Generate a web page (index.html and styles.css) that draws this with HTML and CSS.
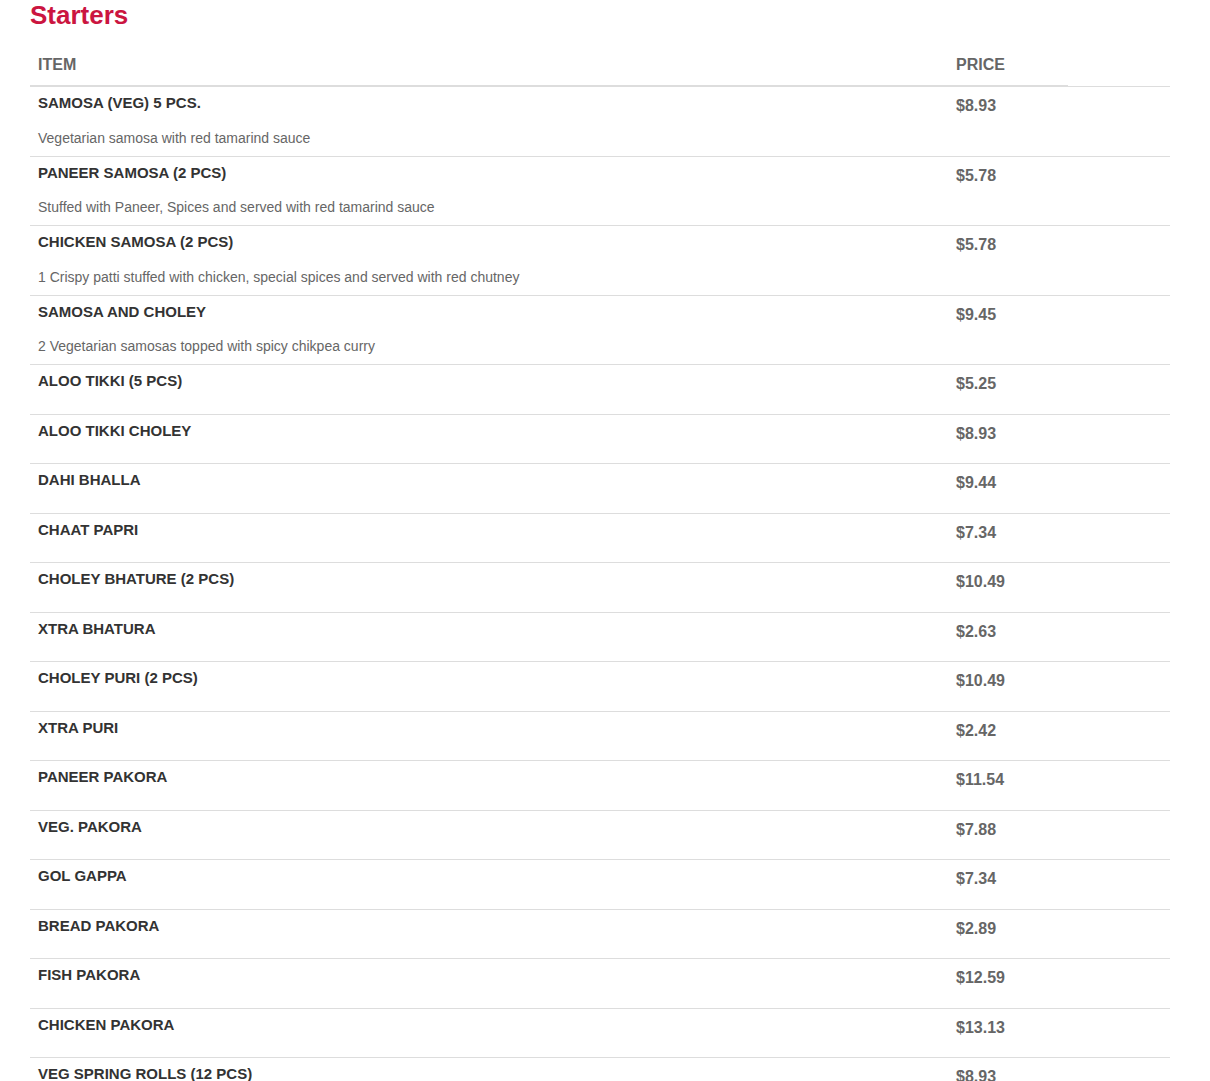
FILE: index.html
```html
<!DOCTYPE html>
<html>
<head>
<meta charset="utf-8">
<link rel="stylesheet" href="styles.css">
</head>
<body>
<div class="menu">
  <h2 class="section-title">Starters</h2>
  <table class="menu-table">
    <colgroup>
      <col class="col-item">
      <col class="col-price">
      <col class="col-extra">
    </colgroup>
    <thead>
      <tr><th>ITEM</th><th>PRICE</th></tr>
    </thead>
    <tbody>
      <tr><td><div class="name">SAMOSA (VEG) 5 PCS.</div><div class="desc">Vegetarian samosa with red tamarind sauce</div></td><td class="price">$8.93</td><td></td></tr>
      <tr><td><div class="name">PANEER SAMOSA (2 PCS)</div><div class="desc">Stuffed with Paneer, Spices and served with red tamarind sauce</div></td><td class="price">$5.78</td><td></td></tr>
      <tr><td><div class="name">CHICKEN SAMOSA (2 PCS)</div><div class="desc">1 Crispy patti stuffed with chicken, special spices and served with red chutney</div></td><td class="price">$5.78</td><td></td></tr>
      <tr><td><div class="name">SAMOSA AND CHOLEY</div><div class="desc">2 Vegetarian samosas topped with spicy chikpea curry</div></td><td class="price">$9.45</td><td></td></tr>
      <tr><td><div class="name">ALOO TIKKI (5 PCS)</div></td><td class="price">$5.25</td><td></td></tr>
      <tr><td><div class="name">ALOO TIKKI CHOLEY</div></td><td class="price">$8.93</td><td></td></tr>
      <tr><td><div class="name">DAHI BHALLA</div></td><td class="price">$9.44</td><td></td></tr>
      <tr><td><div class="name">CHAAT PAPRI</div></td><td class="price">$7.34</td><td></td></tr>
      <tr><td><div class="name">CHOLEY BHATURE (2 PCS)</div></td><td class="price">$10.49</td><td></td></tr>
      <tr><td><div class="name">XTRA BHATURA</div></td><td class="price">$2.63</td><td></td></tr>
      <tr><td><div class="name">CHOLEY PURI (2 PCS)</div></td><td class="price">$10.49</td><td></td></tr>
      <tr><td><div class="name">XTRA PURI</div></td><td class="price">$2.42</td><td></td></tr>
      <tr><td><div class="name">PANEER PAKORA</div></td><td class="price">$11.54</td><td></td></tr>
      <tr><td><div class="name">VEG. PAKORA</div></td><td class="price">$7.88</td><td></td></tr>
      <tr><td><div class="name">GOL GAPPA</div></td><td class="price">$7.34</td><td></td></tr>
      <tr><td><div class="name">BREAD PAKORA</div></td><td class="price">$2.89</td><td></td></tr>
      <tr><td><div class="name">FISH PAKORA</div></td><td class="price">$12.59</td><td></td></tr>
      <tr><td><div class="name">CHICKEN PAKORA</div></td><td class="price">$13.13</td><td></td></tr>
      <tr><td><div class="name">VEG SPRING ROLLS (12 PCS)</div></td><td class="price">$8.93</td><td></td></tr>
    </tbody>
  </table>
</div>
</body>
</html>
```
FILE: styles.css
```css
html, body {
  margin: 0;
  padding: 0;
  background: #fff;
}
body {
  font-family: "Liberation Sans", Arial, Helvetica, sans-serif;
  font-size: 14px;
  line-height: 1.42857;
  color: #333;
}
.menu {
  width: 1140px;
  margin-left: 30px;
}
.section-title {
  margin: 0 0 16px;
  padding-top: 1px;
  font-size: 26px;
  line-height: 1.1;
  font-weight: bold;
  color: #cb1540;
}
.menu-table {
  width: 1140px;
  border-collapse: collapse;
  border-spacing: 0;
  table-layout: fixed;
}
.col-item { width: 918px; }
.col-price { width: 120px; }
.col-extra { width: 102px; }
.menu-table th {
  text-align: left;
  padding: 8px 8px 9px;
  font-size: 16px;
  font-weight: bold;
  color: #666;
  border-bottom: 2px solid #ddd;
  vertical-align: bottom;
}
.menu-table td {
  padding: 8px;
  border-top: 1px solid #ddd;
  vertical-align: top;
}
.name {
  font-size: 15px;
  line-height: 15px;
  font-weight: bold;
  color: #333;
  margin-bottom: 17.5px;
}
.desc {
  font-size: 14px;
  line-height: 20px;
  color: #666;
}
.price {
  font-size: 16px;
  font-weight: bold;
  color: #666;
}
```
